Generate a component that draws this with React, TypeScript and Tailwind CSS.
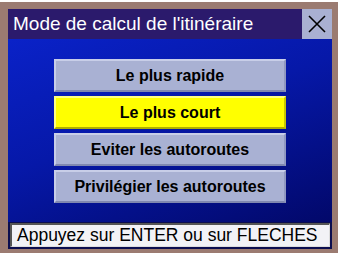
import React from "react";

const options = [
  { label: "Le plus rapide", selected: false },
  { label: "Le plus court", selected: true },
  { label: "Eviter les autoroutes", selected: false },
  { label: "Privilégier les autoroutes", selected: false },
];

export default function App() {
  return (
    <div
      className="w-[340px] h-[254px] bg-white pt-[2px]"
      style={{ fontFamily: '"Liberation Sans", Arial, sans-serif' }}
    >
      <div className="w-[338px] h-[251px] bg-[#9b7b71] pl-[8px] pt-[7px] pr-[6px] pb-[4px]">
        <div className="flex flex-col w-[324px] h-[240px]">
          {/* title bar */}
          <div className="flex h-[30px]">
            <div className="flex-1 bg-[#2b1a6c] text-white text-[19px] leading-[30px] pl-[5px]">
              Mode de calcul de l'itinéraire
            </div>
            <div className="w-[30px] bg-[#a9b0d2] flex items-center justify-center">
              <svg width="20" height="20" viewBox="0 0 20 20">
                <path d="M2 2 L18 18 M18 2 L2 18" stroke="#000" strokeWidth="1.6" />
              </svg>
            </div>
          </div>
          {/* body */}
          <div className="flex-1 flex flex-col items-center pt-[20px] gap-[4px] bg-[linear-gradient(160deg,#0a22c8_0%,#0618a8_45%,#02086a_100%)]">
            {options.map((o) => (
              <div
                key={o.label}
                className={
                  "w-[232px] h-[33px] flex items-center justify-center font-bold text-[16px] text-black border-t-2 border-l-2 border-b-2 border-r-2 " +
                  (o.selected
                    ? "bg-[#ffff00] border-t-[#ffff80] border-l-[#ffff80] border-b-[#b0b000] border-r-[#c8c800]"
                    : "bg-[#a9b1d3] border-t-[#c8cee8] border-l-[#c8cee8] border-b-[#8088b0] border-r-[#9098c0]")
                }
              >
                {o.label}
              </div>
            ))}
          </div>
          {/* status bar */}
          <div className="h-[27px] bg-[#0b0d4e] px-[2px] pb-[2px] pt-[1px]">
            <div className="h-full bg-[#f2f2f6] border-t-2 border-l-2 border-[#555] border-r border-b border-r-[#ddd] border-b-[#ddd] text-black text-[17.5px] leading-[20px] pl-[5px]">
              Appuyez sur ENTER ou sur FLECHES
            </div>
          </div>
        </div>
      </div>
    </div>
  );
}
